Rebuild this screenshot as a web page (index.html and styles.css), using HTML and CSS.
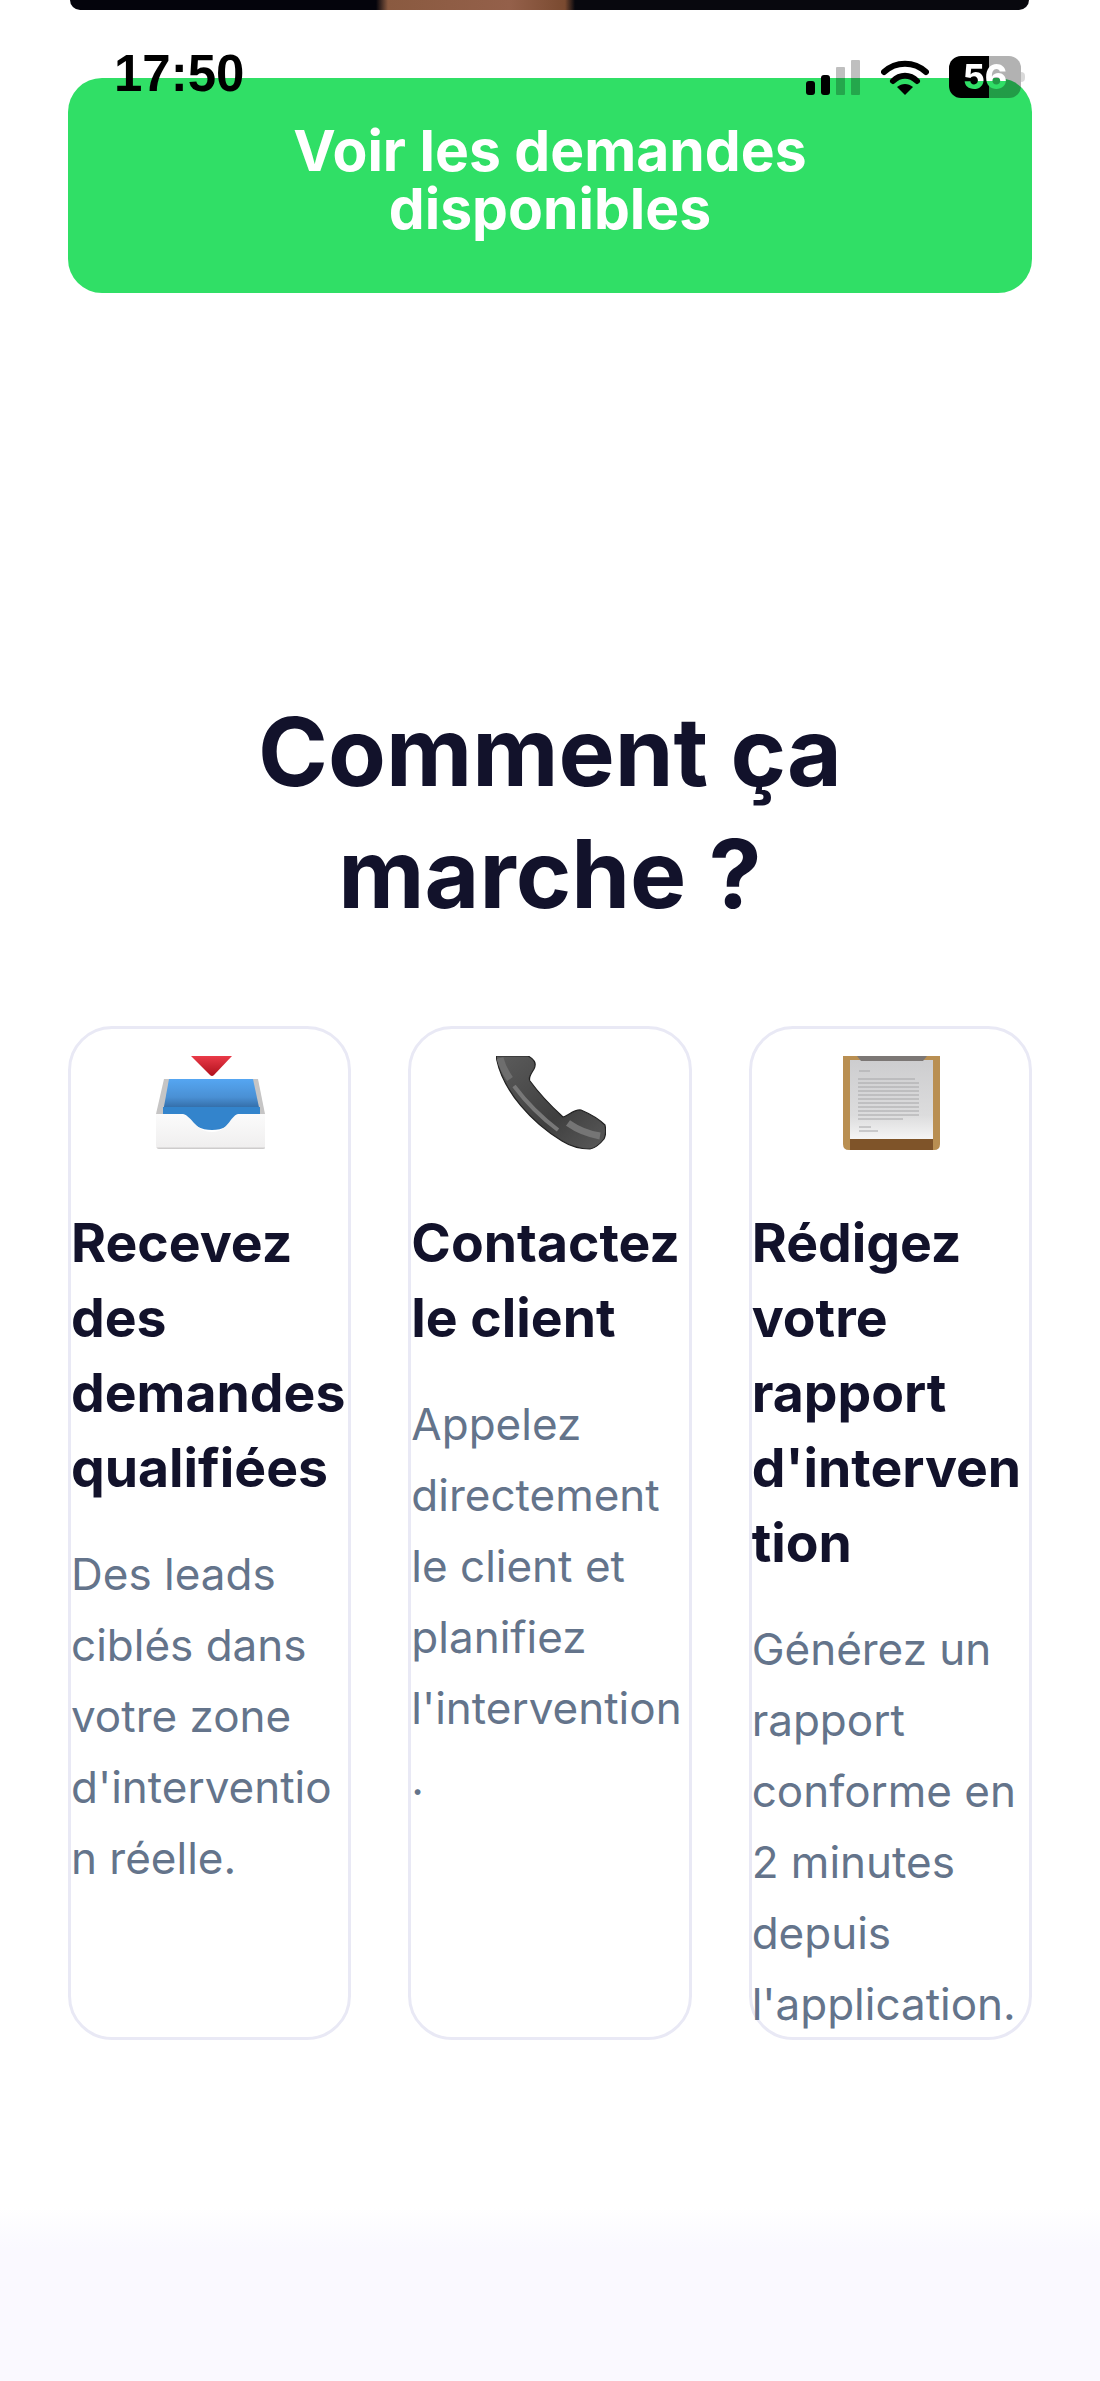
FILE: index.html
```html
<!DOCTYPE html>
<html lang="fr">
<head>
    <meta charset="UTF-8">
    <meta name="viewport" content="width=device-width, initial-scale=1.0">
    <title>Comment ça marche ?</title>
    <link rel="stylesheet" href="styles.css">
</head>
<body>
    <div class="status-bar">
        <span class="status-time">17:50</span>
        <div class="status-icons">
            <svg class="signal" width="56" height="36" viewBox="0 0 56 36">
                <rect x="0" y="21" width="9" height="14" rx="3" fill="#000"/>
                <rect x="15" y="15" width="9" height="20" rx="3" fill="#000"/>
                <rect x="30" y="7" width="9" height="28" rx="1" fill="#000" fill-opacity="0.25"/>
                <rect x="45" y="0" width="9" height="35" rx="1" fill="#000" fill-opacity="0.25"/>
            </svg>
            <svg class="wifi" width="48" height="36" viewBox="0 0 48 36">
                <path d="M3 12 C15 1 33 1 45 12" fill="none" stroke="#000" stroke-width="6" stroke-linecap="round"/>
                <path d="M12 21 C19 14 29 14 36 21" fill="none" stroke="#000" stroke-width="6" stroke-linecap="round"/>
                <path d="M16 27 C21 23 27 23 32 27 L24 35 Z" fill="#000"/>
            </svg>
            <div class="battery">
                <span class="battery-text">56</span>
            </div>
            <div class="battery-tip"></div>
        </div>
    </div>

    <div class="video-end"></div>

    <main class="content">
        <a class="cta" href="#">Voir les demandes<br>disponibles</a>

        <h2 class="section-title">Comment ça<br>marche ?</h2>

        <div class="steps">
            <div class="step">
                <div class="step-icon">
                    <svg width="110" height="94" viewBox="0 0 110 94">
                        <defs>
                            <linearGradient id="trayRed" x1="0" y1="0" x2="0" y2="1">
                                <stop offset="0" stop-color="#ea3a48"/>
                                <stop offset="1" stop-color="#b0101c"/>
                            </linearGradient>
                            <linearGradient id="trayBlue" x1="0" y1="0" x2="0" y2="1">
                                <stop offset="0" stop-color="#55a6f2"/>
                                <stop offset="0.55" stop-color="#4a90d4"/>
                                <stop offset="1" stop-color="#2a5f96"/>
                            </linearGradient>
                            <linearGradient id="trayFront" x1="0" y1="0" x2="0" y2="1">
                                <stop offset="0" stop-color="#fbfbfb"/>
                                <stop offset="0.93" stop-color="#f0efef"/>
                                <stop offset="1" stop-color="#c4c2c2"/>
                            </linearGradient>
                        </defs>
                        <path d="M35 0 H76 L58 19 Q56 21 54 19 Z" fill="url(#trayRed)"/>
                        <path d="M8 23 H102 L109 58 H0 Z" fill="#c6c5c5"/>
                        <path d="M13 23 H97 L104 56 H7 Z" fill="url(#trayBlue)"/>
                        <path d="M7 51 H104 V60 H82 Q72 74 56 74 Q40 74 28 60 H7 Z" fill="#3384cc"/>
                        <path d="M0 58 H27 C36 60 40 76 56 76 C72 76 74 60 82 58 H109 V92 Q109 93 107 93 H3 Q0 93 0 89 Z" fill="url(#trayFront)"/>
                    </svg>
                </div>
                <h3 class="step-title">Recevez des demandes qualifiées</h3>
                <p class="step-text">Des leads ciblés dans votre zone d'interventio n réelle.</p>
            </div>

            <div class="step">
                <div class="step-icon">
                    <svg width="110" height="94" viewBox="0 0 110 94">
                        <defs>
                            <linearGradient id="phoneBody" x1="0" y1="0" x2="1" y2="1">
                                <stop offset="0" stop-color="#5c5c5c"/>
                                <stop offset="0.6" stop-color="#3f3f3f"/>
                                <stop offset="1" stop-color="#5a5a5a"/>
                            </linearGradient>
                        </defs>
                        <path d="M0 0 H32 C38 3 41 7 38 13 C35 18 32 22 34 25 C42 36 55 50 67 61 C72 60 78 53 85 54 C92 57 102 62 109 69 C110 74 110 79 108 83 C104 88 100 92 94 93 C84 93 74 90 66 85 C38 68 6 36 0 0 Z" fill="url(#phoneBody)" stroke="#222" stroke-width="1.2"/>
                        <path d="M18 30 C30 46 46 62 62 74" fill="none" stroke="#787878" stroke-width="4"/>
                        <path d="M4 2 C6 10 9 16 14 23" fill="none" stroke="#6e6e6e" stroke-width="7"/>
                        <path d="M72 67 C82 74 92 78 104 80" fill="none" stroke="#757575" stroke-width="7"/>
                    </svg>
                </div>
                <h3 class="step-title">Contactez le client</h3>
                <p class="step-text">Appelez directement le client et planifiez l'intervention<br>.</p>
            </div>

            <div class="step">
                <div class="step-icon">
                    <svg width="97" height="94" viewBox="0 0 97 94">
                        <defs>
                            <linearGradient id="clipPaper" x1="0" y1="0" x2="0" y2="1">
                                <stop offset="0" stop-color="#cdcdcf"/>
                                <stop offset="0.7" stop-color="#dcdcdd"/>
                                <stop offset="1" stop-color="#f5f5f5"/>
                            </linearGradient>
                        </defs>
                        <path d="M0 0 H97 V88 Q97 94 91 94 H6 Q0 94 0 88 Z" fill="#b98f52"/>
                        <rect x="7" y="83" width="83" height="11" fill="#7f5429"/>
                        <rect x="7" y="4" width="83" height="79" fill="url(#clipPaper)"/>
                        <path d="M14 0 H84 L80 5 H18 Z" fill="#7c7775"/>
                        <g stroke="#a6a6a8" stroke-width="1">
                            <line x1="16" y1="15" x2="27" y2="15"/>
                            <line x1="15" y1="23" x2="72" y2="23"/>
                            <line x1="15" y1="27" x2="76" y2="27"/>
                            <line x1="15" y1="31" x2="76" y2="31"/>
                            <line x1="15" y1="35" x2="76" y2="35"/>
                            <line x1="15" y1="39" x2="76" y2="39"/>
                            <line x1="15" y1="43" x2="76" y2="43"/>
                            <line x1="15" y1="47" x2="76" y2="47"/>
                            <line x1="15" y1="51" x2="76" y2="51"/>
                            <line x1="15" y1="55" x2="76" y2="55"/>
                            <line x1="15" y1="59" x2="76" y2="59"/>
                            <line x1="15" y1="63" x2="60" y2="63"/>
                            <line x1="16" y1="71" x2="28" y2="71"/>
                            <line x1="16" y1="75" x2="35" y2="75"/>
                        </g>
                    </svg>
                </div>
                <h3 class="step-title">Rédigez votre rapport d'intervention</h3>
                <p class="step-text">Générez un rapport conforme en 2 minutes depuis l'application.</p>
            </div>
        </div>
    </main>

    <div class="next-section"></div>
</body>
</html>
```

FILE: styles.css
```css
* {
    box-sizing: border-box;
}

html, body {
    margin: 0;
    padding: 0;
}

body {
    position: relative;
    width: 1100px;
    height: 2381px;
    overflow: hidden;
    display: flex;
    flex-direction: column;
    background-color: #fff;
    font-family: 'Inter', 'Liberation Sans', sans-serif;
}

.status-bar {
    position: absolute;
    top: 48px;
    left: 114px;
    width: 911px;
    display: flex;
    justify-content: space-between;
    align-items: center;
    z-index: 2;
}

.status-time {
    font-family: 'Liberation Sans', sans-serif;
    font-size: 51px;
    font-weight: bold;
    line-height: 52px;
    color: #000;
}

.status-icons {
    display: flex;
    align-items: center;
}

.signal {
    margin-right: 19px;
    margin-top: 8px;
}

.wifi {
    margin-right: 20px;
    margin-top: 8px;
}

.battery {
    width: 72px;
    height: 42px;
    border-radius: 12px;
    background: linear-gradient(90deg, #000 40px, rgba(0, 0, 0, 0.3) 40px);
    display: flex;
    align-items: center;
    justify-content: center;
    margin-top: 5px;
}

.battery-text {
    font-size: 34px;
    font-weight: 800;
    line-height: 42px;
    color: transparent;
    background: linear-gradient(#fff 60%, #30df66 60%);
    -webkit-background-clip: text;
    background-clip: text;
}

.battery-tip {
    width: 4px;
    height: 10px;
    margin-top: 5px;
    border-radius: 0 4px 4px 0;
    background-color: rgba(0, 0, 0, 0.15);
}

.video-end {
    height: 10px;
    margin: 0 71px 0 70px;
    border-radius: 0 0 24px 24px;
    background: linear-gradient(90deg, #04040c 0, #04040c 306px, #8a5a40 318px, #94604a 440px, #7a4a30 495px, #08080e 505px, #08080e 100%);
}

.content {
    padding: 68px 68px 0;
}

.cta {
    display: flex;
    align-items: center;
    justify-content: center;
    height: 215px;
    padding-bottom: 12px;
    border-radius: 34px;
    background-color: #30df66;
    color: #fff;
    font-size: 57px;
    font-weight: 700;
    line-height: 58px;
    text-align: center;
    text-decoration: none;
}

.section-title {
    margin: 398px 0 91px;
    color: #12122b;
    font-size: 94.5px;
    font-weight: 700;
    line-height: 122px;
    text-align: center;
}

.steps {
    display: grid;
    grid-template-columns: repeat(3, minmax(0, 1fr));
    gap: 57px;
}

.step {
    height: 1014px;
    border: 3px solid #e9e9f5;
    border-radius: 44px;
    overflow-wrap: break-word;
}

.step-icon {
    display: flex;
    justify-content: center;
    height: 94px;
    margin: 27px 0 55px;
    padding-left: 3px;
}

.step-title {
    margin: 0 0 34px;
    color: #12122b;
    font-size: 53.5px;
    font-weight: 700;
    line-height: 75px;
}

.step-text {
    margin: 0;
    color: #64748b;
    font-size: 44px;
    line-height: 71px;
}

.next-section {
    flex: 1;
    margin-top: 168px;
    background: linear-gradient(#fff, #faf9ff 40px);
}
```
